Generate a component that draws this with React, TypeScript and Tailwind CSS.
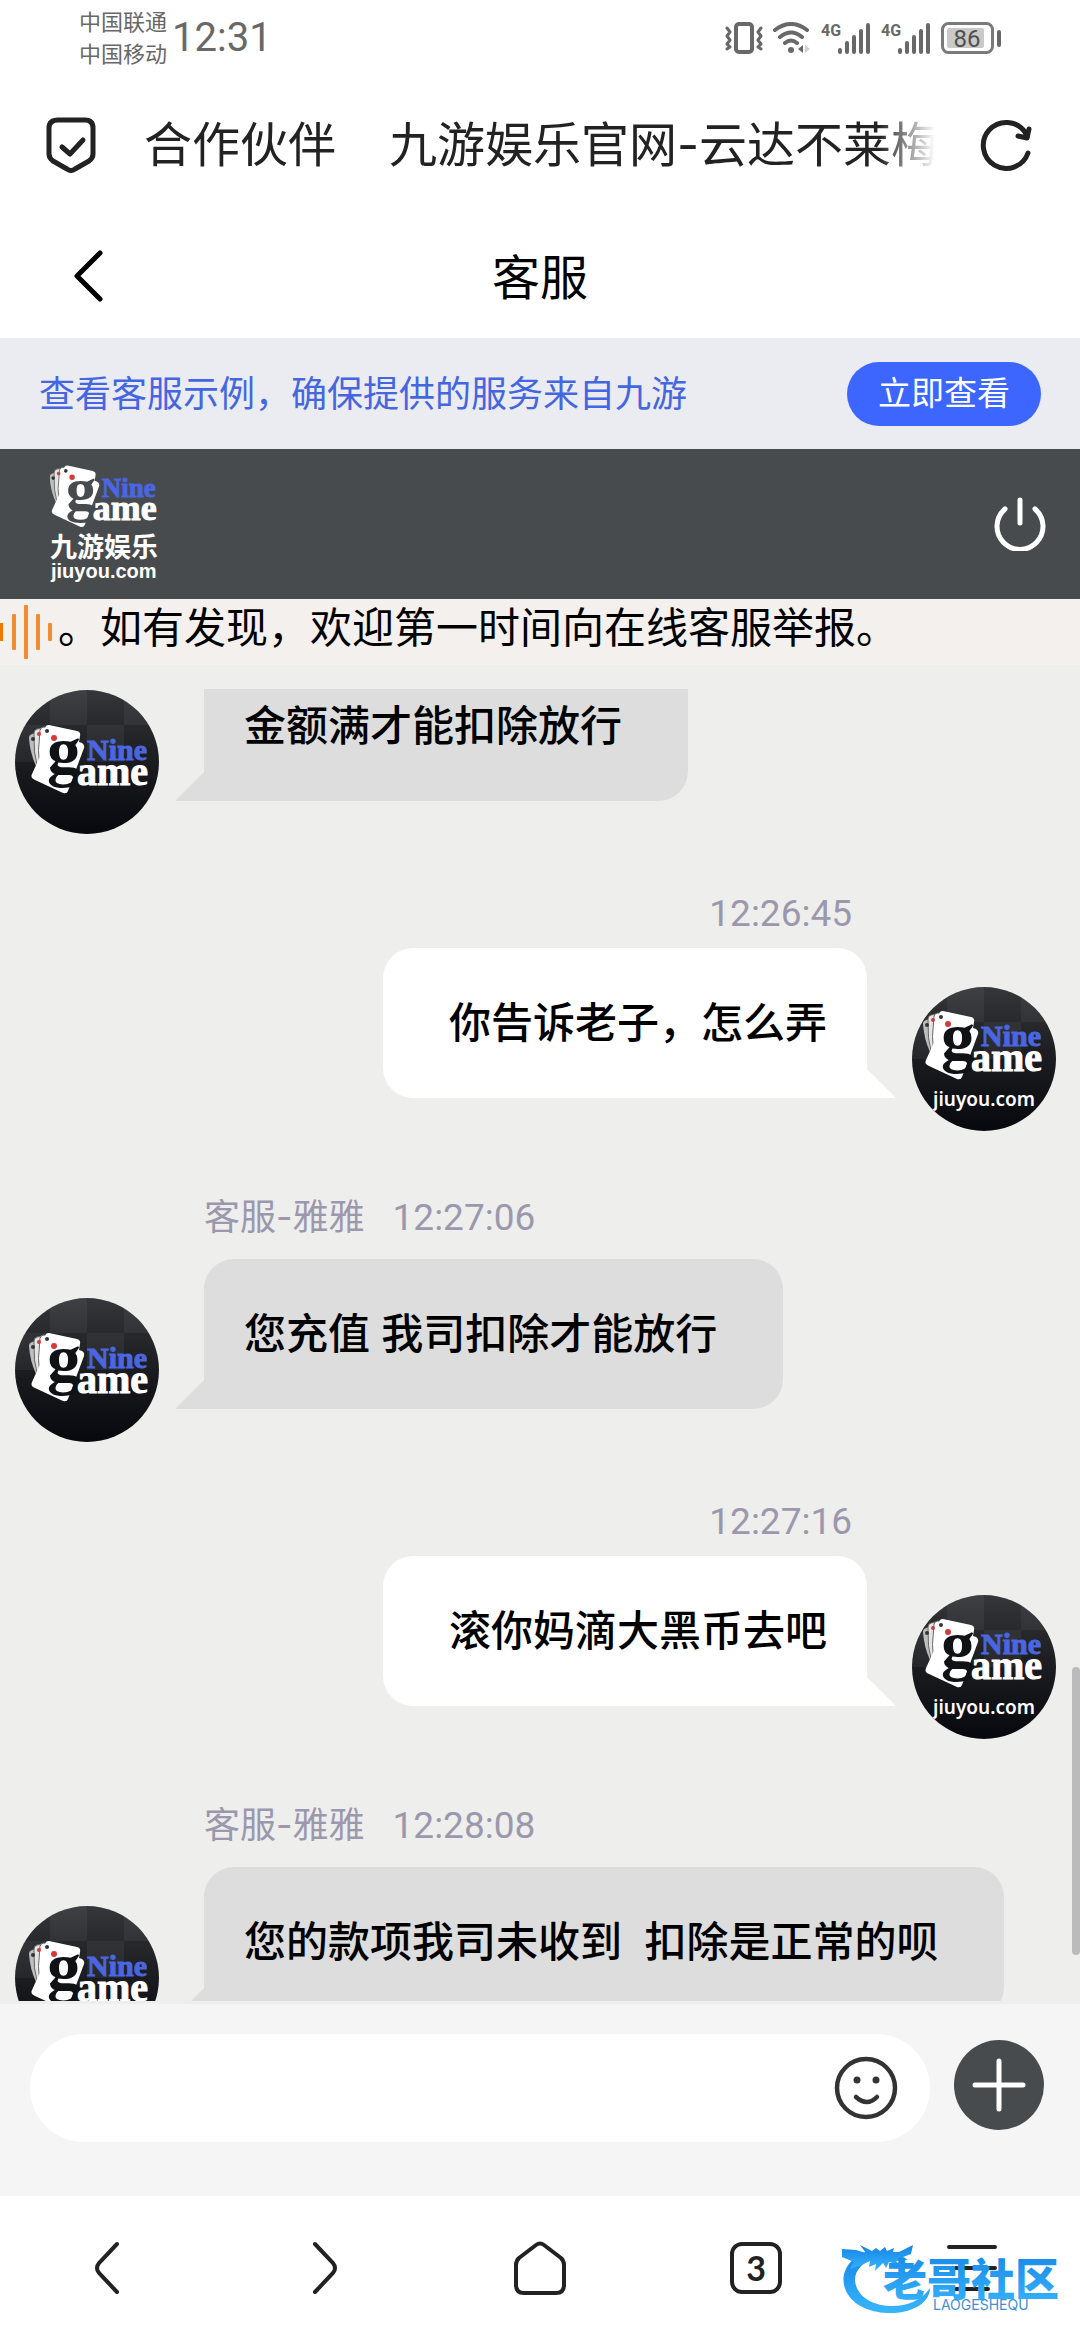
import { useState } from 'react';

interface Message {
  id: number;
  from: 'agent' | 'me';
  time: string;
  text: string;
}

const AGENT_NAME = '客服-雅雅';

const messages: Message[] = [
  { id: 1, from: 'agent', time: '12:26:30', text: '金额满才能扣除放行' },
  { id: 2, from: 'me', time: '12:26:45', text: '你告诉老子，怎么弄' },
  { id: 3, from: 'agent', time: '12:27:06', text: '您充值 我司扣除才能放行' },
  { id: 4, from: 'me', time: '12:27:16', text: '滚你妈滴大黑币去吧' },
  { id: 5, from: 'agent', time: '12:28:08', text: '您的款项我司未收到  扣除是正常的呗' },
];

const VibrateIcon = () => (
  <svg viewBox="0 0 38 32" className="h-8 w-[38px]" fill="none" stroke="#686868" strokeLinecap="round" strokeLinejoin="round">
    <rect x="11" y="2" width="16" height="28" rx="3" strokeWidth="4" />
    <path d="M2 6l3 4-3 4 3 4-3 4 3 3-3 2M36 6l-3 4 3 4-3 4 3 4-3 3 3 2" strokeWidth="3" />
  </svg>
);

const WifiIcon = () => (
  <svg viewBox="0 0 38 32" className="h-8 w-[38px]" fill="none" stroke="#686868" strokeWidth="4" strokeLinecap="round">
    <path d="M2 8q16-12 32 0M7 15q11-9 22 0M12 21q6-5 12 0" />
    <circle cx="18" cy="28" r="3" fill="#686868" stroke="none" />
    <path d="M30 23v8l-5-4z" fill="#686868" stroke="none" />
    <path d="M32 23v8l5-4z" fill="#d0d0d0" stroke="none" />
  </svg>
);

const SignalIcon = () => (
  <svg viewBox="0 0 50 32" className="h-8 w-[50px]" fill="#686868">
    <text x="0" y="14" fontFamily="Roboto, sans-serif" fontSize="16" fontWeight="700">4G</text>
    <rect x="17" y="26" width="4" height="6" rx="2" />
    <rect x="24" y="19" width="4" height="13" rx="2" />
    <rect x="31" y="13" width="4" height="19" rx="2" />
    <rect x="38" y="7" width="4" height="25" rx="2" />
    <rect x="45" y="1" width="4" height="31" rx="2" />
  </svg>
);

const BatteryIcon = () => (
  <svg viewBox="0 0 60 32" className="h-8 w-[60px]">
    <rect x="1.5" y="1.5" width="50" height="29" rx="6" fill="none" stroke="#7a7a7a" strokeWidth="3" />
    <rect x="6" y="6" width="37" height="20" rx="2" fill="#c9c9c9" />
    <rect x="56" y="8" width="4" height="17" rx="2" fill="#686868" />
    <text x="26" y="25" textAnchor="middle" fontFamily="Roboto, sans-serif" fontSize="24" fill="#505050">86</text>
  </svg>
);

const CardMark = ({ ink }: { ink: string }) => (
  <g>
    <path d="M14 48q0-3 3-4l6-2 10 14-12 20q-6-13-7-28z" fill="#bdbdbd" />
    <path d="M19 43q0-3 3-4l6-1 8 14-13 28q-5-18-4-37z" fill="#e4e4e4" stroke="#666" strokeWidth="1" />
    <path d="M25 40q1-3 4-3l5 1 6 12-15 32q-3-22 0-42z" fill="#fff" stroke="#666" strokeWidth="1" />
    <path d="M34 35l28 6q4 1 3 5l-1 6 3 1q3 2 2 5L53 101q-1 3-5 2L20 90q-5-2-3-6l16-35-3-10q0-4 4-4z" fill="#fff" />
    <circle cx="18" cy="49" r="2" fill="#333" />
    <circle cx="24" cy="44" r="2" fill="#d33a3a" />
    <circle cx="32" cy="41" r="2" fill="#333" />
    <circle cx="39" cy="48" r="3" fill="#d33a3a" />
    <g fontFamily="'Liberation Serif', serif" fontWeight="700">
      <text x="32" y="84" fontSize="68" fill={ink}>g</text>
      <text x="72" y="70" fontSize="30" fill="#4a66e0" stroke="#4a66e0">Nine</text>
      <text x="62" y="95" fontSize="40" fill="#fff" stroke="#fff">ame</text>
    </g>
  </g>
);

const Avatar = ({ from }: { from: Message['from'] }) => (
  <svg viewBox="0 0 144 144" className="h-36 w-36 shrink-0 rounded-full bg-gradient-to-b from-[#34363a] via-[#1b1c20] to-[#08090e]">
    <path d="M35 0h37v35H35zM72 35h37v37H72zM0 35h35v37H0zM109 0h35v35h-35z" fill="#fff" opacity="0.05" />
    {from === 'agent' ? (
      <CardMark ink="#111216" />
    ) : (
      <>
        <g transform="translate(-3 -11)">
          <CardMark ink="#111216" />
        </g>
        <text x="21" y="119" fontFamily="'Noto Sans', sans-serif" fontSize="19" fontWeight="600" fill="#fff">jiuyou.com</text>
      </>
    )}
  </svg>
);

const BrandLogo = () => (
  <svg viewBox="0 0 110 120" className="h-[120px] w-[110px]">
    <g transform="translate(-13 -30) scale(0.9)">
      <CardMark ink="#484b4d" />
    </g>
    <text x="0" y="93" fontFamily="'Noto Sans CJK SC', sans-serif" fontSize="27" fontWeight="700" fill="#fff">九游娱乐</text>
    <text x="1" y="114" fontFamily="'Liberation Sans', sans-serif" fontSize="20" fontWeight="700" fill="#fff">jiuyou.com</text>
  </svg>
);

const StatusBar = () => (
  <div className="flex h-[76px] items-center justify-between px-[79px] text-[#686868]">
    <div className="flex items-center gap-[5px]">
      <div className="text-[22px] leading-8">
        <p>中国联通</p>
        <p>中国移动</p>
      </div>
      <span className="font-[Roboto] text-[40px] leading-none">12:31</span>
    </div>
    <div className="flex items-center gap-2.5">
      <VibrateIcon />
      <WifiIcon />
      <SignalIcon />
      <SignalIcon />
      <BatteryIcon />
    </div>
  </div>
);

const AddressBar = () => (
  <div className="flex h-[138px] items-center pr-12 pl-[46px] text-[#222]">
    <button type="button" aria-label="安全">
      <svg viewBox="0 0 50 56" className="h-14 w-[50px]" fill="none" stroke="currentColor" strokeWidth="5" strokeLinecap="round" strokeLinejoin="round">
        <path d="M12 3h27q8 0 8 8v26q0 4-4 7L29 52q-4 3-8 0L7 44q-4-3-4-7V11q0-8 9-8z" />
        <path d="M16 30l8 7 13-14" />
      </svg>
    </button>
    <div className="ml-12 min-w-0 flex-1 overflow-hidden text-5xl leading-[72px] whitespace-nowrap [mask-image:linear-gradient(to_right,black_calc(100%-56px),transparent)]">
      <span className="mr-[53px]">合作伙伴</span>
      <span>九游娱乐官网-云达不莱梅</span>
    </div>
    <button type="button" aria-label="刷新" className="ml-[45px]">
      <svg viewBox="0 0 52 52" className="h-[52px] w-[52px]" fill="none" stroke="currentColor" strokeWidth="5" strokeLinecap="round" strokeLinejoin="round">
        <path d="M48 34A23 23 0 1 1 45 13l2 5" />
        <path d="M38 17l9 2 2-9" />
      </svg>
    </button>
  </div>
);

const PageHeader = () => (
  <header className="grid h-[124px] grid-cols-3 items-center">
    <button type="button" aria-label="返回" className="ml-[72px] w-8">
      <svg viewBox="0 0 32 54" className="h-[54px] w-8" fill="none" stroke="#000" strokeWidth="5" strokeLinecap="round" strokeLinejoin="round">
        <path d="M28 4L5 27l23 23" />
      </svg>
    </button>
    <h1 className="pt-1 text-center text-5xl leading-[72px]">客服</h1>
  </header>
);

const Banner = () => (
  <div className="flex h-[111px] items-center justify-between bg-[#ebecf1] px-[39px]">
    <p className="text-4xl text-[#4466e0]">查看客服示例，确保提供的服务来自九游</p>
    <button type="button" className="h-16 rounded-full bg-[#3c66ff] px-[31px] text-[33px] leading-none text-white">
      立即查看
    </button>
  </div>
);

const Notice = () => (
  <div className="flex h-[66px] items-start overflow-hidden bg-[#f4f0ed]">
    <svg viewBox="0 0 58 66" className="h-[66px] w-[58px] shrink-0" fill="#f28c33">
      <rect x="-1" y="24" width="4" height="18" fill="#f07800" />
      <rect x="12" y="15" width="4" height="36" rx="1" />
      <rect x="24" y="6" width="4" height="54" rx="1" />
      <rect x="36" y="15" width="4" height="36" rx="1" />
      <rect x="48" y="24" width="4" height="18" rx="1" />
    </svg>
    <p className="text-[42px] leading-[58px] whitespace-nowrap">。如有发现，欢迎第一时间向在线客服举报。</p>
  </div>
);

const AgentMessage = ({ time, text }: Message) => (
  <li className="flex items-end gap-[45px] pl-[15px]">
    <Avatar from="agent" />
    <div className="mb-[33px]">
      <p className="mb-[11px] text-4xl leading-[60px] text-[#9b98ae]">
        {AGENT_NAME}
        <time className="ml-7 font-[Roboto] text-[37px]">{time}</time>
      </p>
      <div className="relative w-fit rounded-[30px] rounded-bl-none bg-[#dddddd] py-11 pr-[66px] pl-10 text-[42px] leading-[62px] font-medium whitespace-pre">
        {text}
        <svg viewBox="0 0 30 30" className="absolute bottom-0 -left-[29px] h-[30px] w-[30px]" fill="#dddddd">
          <path d="M30 0v30H0z" />
        </svg>
      </div>
    </div>
  </li>
);

const MyMessage = ({ time, text }: Message) => (
  <li className="flex items-end justify-end gap-[45px] pr-6">
    <div className="mb-[33px]">
      <p className="mr-[15px] mb-[10px] text-right font-[Roboto] text-[37px] leading-[48px] text-[#9b98ae]">
        <time>{time}</time>
      </p>
      <div className="relative ml-auto w-fit rounded-[30px] rounded-br-none bg-white py-11 pr-10 pl-[66px] text-[42px] leading-[62px] font-medium whitespace-pre">
        {text}
        <svg viewBox="0 0 30 30" className="absolute -right-[29px] bottom-0 h-[30px] w-[30px]" fill="#fff">
          <path d="M0 0v30h30z" />
        </svg>
      </div>
    </div>
    <Avatar from="me" />
  </li>
);

const Composer = () => {
  const [draft, setDraft] = useState('');

  return (
    <form
      onSubmit={(event) => event.preventDefault()}
      className="flex items-center gap-6 border-t-[3px] border-[#eeeeee] bg-[#f5f5f5] pt-[30px] pr-9 pb-[54px] pl-[30px]"
    >
      <div className="flex h-[108px] flex-1 items-center rounded-full bg-white pr-8 pl-12">
        <input
          type="text"
          aria-label="输入消息"
          value={draft}
          onChange={(event) => setDraft(event.target.value)}
          className="min-w-0 flex-1 bg-transparent text-[42px] outline-none"
        />
        <button type="button" aria-label="表情">
          <svg viewBox="0 0 64 64" className="h-16 w-16" fill="none" stroke="#333" strokeLinecap="round">
            <circle cx="32" cy="32" r="29" strokeWidth="4.5" />
            <path d="M22 41q11 10 21 0" strokeWidth="4.5" />
            <circle cx="23" cy="24" r="3.5" fill="#333" stroke="none" />
            <circle cx="42" cy="24" r="3.5" fill="#333" stroke="none" />
          </svg>
        </button>
      </div>
      <button type="button" aria-label="更多" className="mb-1.5 rounded-full bg-[#484b4d]">
        <svg viewBox="0 0 90 90" className="h-[90px] w-[90px]" stroke="#fff" strokeWidth="5" strokeLinecap="round">
          <path d="M45 21v48M21 45h48" />
        </svg>
      </button>
    </form>
  );
};

const Watermark = () => (
  <svg viewBox="0 0 230 80" className="pointer-events-none absolute right-2 bottom-5 h-20 w-[230px]">
    <defs>
      <linearGradient id="wave" x1="0" y1="0" x2="0" y2="1">
        <stop offset="0" stopColor="#1583e6" />
        <stop offset="1" stopColor="#38b6fb" />
      </linearGradient>
    </defs>
    <g fill="url(#wave)">
      <path d="M26 11C2 20-2 38 4 51c8 17 30 23 48 22 20-1 36-11 36-25-8 12-22 18-38 18-20 0-36-10-37-26 0-10 8-19 23-23z" />
      <path d="M0 9l14 1 10 3-6-8 12 6 4-3 4 3 5-4 2 4 7-3-1 4 6 0 14-7-2 9-8 3 5 3-12 1 4 4-11-3-3 6-3-5-8 8 1-7-7 3 1-6-11 5-9 3 4-7-12-5z" />
    </g>
    <text x="41" y="56" fontFamily="'Noto Sans CJK SC', sans-serif" fontSize="44" fontWeight="900" fill="url(#wave)">老哥社区</text>
    <text x="91" y="70" fontFamily="Inter, sans-serif" fontSize="14" fill="#3f8fd6">LAOGESHEQU</text>
  </svg>
);

const BrowserNav = () => (
  <nav className="relative grid h-36 grid-cols-5 place-items-center bg-white text-[#222]">
    <button type="button" aria-label="后退">
      <svg viewBox="0 0 54 54" className="h-[54px] w-[54px]" fill="none" stroke="currentColor" strokeWidth="4" strokeLinecap="round">
        <path d="M36 3L18 22q-4 5 0 10l18 19" />
      </svg>
    </button>
    <button type="button" aria-label="前进">
      <svg viewBox="0 0 54 54" className="h-[54px] w-[54px]" fill="none" stroke="currentColor" strokeWidth="4" strokeLinecap="round">
        <path d="M18 3l18 19q4 5 0 10L18 51" />
      </svg>
    </button>
    <button type="button" aria-label="主页">
      <svg viewBox="0 0 54 54" className="h-[54px] w-[54px]" fill="none" stroke="currentColor" strokeWidth="4" strokeLinejoin="round">
        <path d="M23 4q4-3 8 0l17 13q3 3 3 7v20q0 8-8 8H11q-8 0-8-8V24q0-4 3-7z" />
      </svg>
    </button>
    <button
      type="button"
      aria-label="标签页"
      className="flex h-[52px] w-[52px] items-center justify-center rounded-xl border-4 border-current font-[Lato] text-[34px] leading-none font-bold"
    >
      3
    </button>
    <button type="button" aria-label="菜单">
      <svg viewBox="0 0 54 54" className="h-[54px] w-[54px]" stroke="currentColor" strokeWidth="4" strokeLinecap="round">
        <path d="M4 6h46M4 27h46M11 48h32" />
      </svg>
    </button>
    <Watermark />
  </nav>
);

const App = () => {
  return (
    <div className="flex h-screen flex-col bg-white font-[Inter,'Noto_Sans_CJK_SC',sans-serif] text-black">
      <StatusBar />
      <AddressBar />
      <PageHeader />
      <Banner />

      <div className="flex h-[150px] items-center justify-between bg-[#484b4d] pr-[33px] pl-[50px]">
        <BrandLogo />
        <button type="button" aria-label="结束会话">
          <svg viewBox="0 0 54 54" className="h-[54px] w-[54px]" fill="none" stroke="#fff" strokeWidth="5" strokeLinecap="round">
            <path d="M27 3v23M12 12a23 23 0 1 0 30 0" />
          </svg>
        </button>
      </div>

      <Notice />

      <main className="relative flex min-h-0 flex-1 flex-col bg-[#eeeeec] pt-6">
        <div className="min-h-0 flex-1 overflow-hidden">
          {/* list is scrolled part way into the first message */}
          <ul className="-mt-[110px] flex flex-col gap-14">
            {messages.map((message) =>
              message.from === 'agent' ? (
                <AgentMessage key={message.id} {...message} />
              ) : (
                <MyMessage key={message.id} {...message} />
              )
            )}
          </ul>
        </div>
        <div className="absolute right-0 bottom-[46px] h-[288px] w-2 rounded-full bg-[#bbbbbb]" />
      </main>

      <Composer />
      <BrowserNav />
    </div>
  );
};

export default App;
